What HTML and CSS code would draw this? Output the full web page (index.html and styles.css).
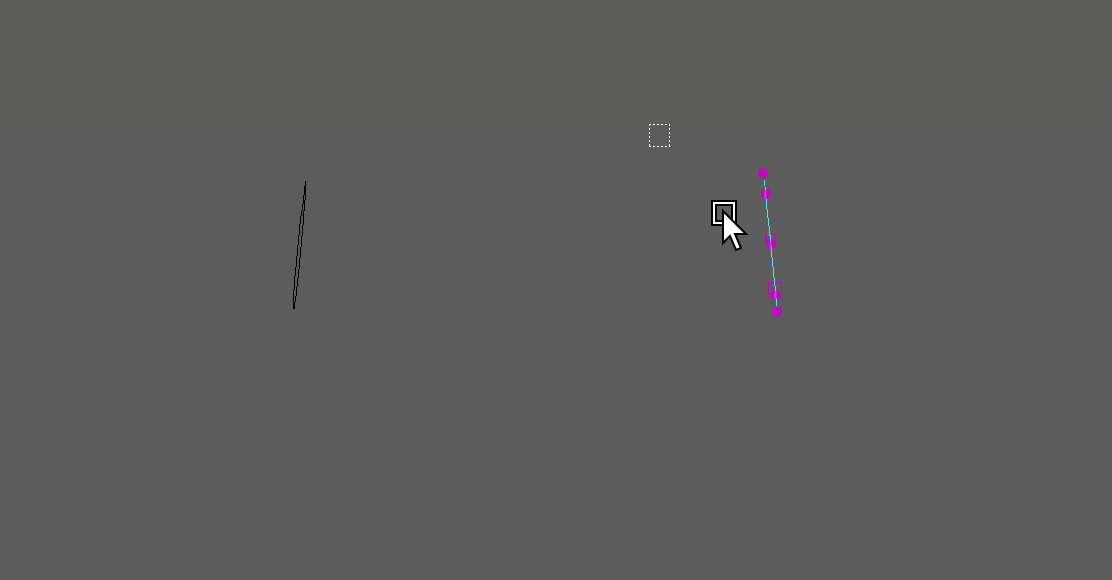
FILE: index.html
```html
<!DOCTYPE html>
<html lang="en">
<head>
<meta charset="utf-8">
<title>Viewport</title>
<link rel="stylesheet" href="styles.css">
</head>
<body>
<main class="viewport">
<svg class="scene" role="img" aria-label="Curve editing viewport">
  <path class="outline" d="M305.5 181V196L304.5 204L303.5 219L301.5 242L299.5 264L297.5 283L295.5 300L294.5 304V309"/>
  <path class="outline" d="M305.5 182L304.5 191L302.5 209L300.5 219L298.5 240L296.5 262L294.5 281L293.5 297V309"/>
  <path class="marquee" d="M649 124.5H670M649 146.5H670"/>
  <path class="marquee" d="M649.5 124V147M669.5 124V147"/>
  <g class="points">
    <circle cx="763" cy="173" r="5"/>
    <circle cx="766" cy="194" r="5"/>
    <circle cx="771" cy="244" r="5"/>
    <circle cx="776" cy="295" r="5"/>
    <circle cx="777" cy="312" r="5"/>
    <path d="M765 234H767V244H765ZM774 234H775V244H774Z"/>
  </g>
  <rect class="handle" x="768.5" y="282.5" width="13" height="12"/>
  <path class="curve" d="M764.5 180L766.5 205L769.5 230L772.5 262L774.5 282L775.5 290L776.5 306"/>
  <path class="curve-shade" d="M765.5 190V199M770.5 241V249M775.5 291V299"/>
  <g class="target">
    <rect class="target-edge" x="714" y="203" width="20" height="20"/>
    <rect class="target-core" x="714" y="203" width="20" height="20"/>
  </g>
  <path class="arrow" d="M723 211V243L730 236L736 250L741 248L735 234H746Z"/>
</svg>
</main>
</body>
</html>
```
FILE: styles.css
```css
body {
  margin: 0;
  background: #5c5c5c;
}
.viewport {
  display: flex;
  min-height: 100vh;
  background: linear-gradient(to bottom, #5c5c5a, #5c5c5c 25%);
}
.scene {
  flex: 1;
  min-width: 0;
}
.outline {
  fill: none;
  stroke: #000;
  stroke-width: 1;
  shape-rendering: crispEdges;
}
.marquee {
  stroke: #fff;
  stroke-width: 1;
  stroke-dasharray: 2 2;
  shape-rendering: crispEdges;
}
.points { fill: #c404c4; }
.handle { fill: none; stroke: #c404c4; stroke-width: 1; }
.curve {
  fill: none;
  stroke: #5ddcff;
  stroke-width: 1;
  shape-rendering: crispEdges;
}
.curve-shade { fill: none; stroke: #c044d4; stroke-width: 2; }
.target { fill: none; }
.target-edge { stroke: #000; stroke-width: 6; }
.target-core { stroke: #fff; stroke-width: 2; }
.arrow { fill: #fff; stroke: #000; stroke-width: 2; }
```
